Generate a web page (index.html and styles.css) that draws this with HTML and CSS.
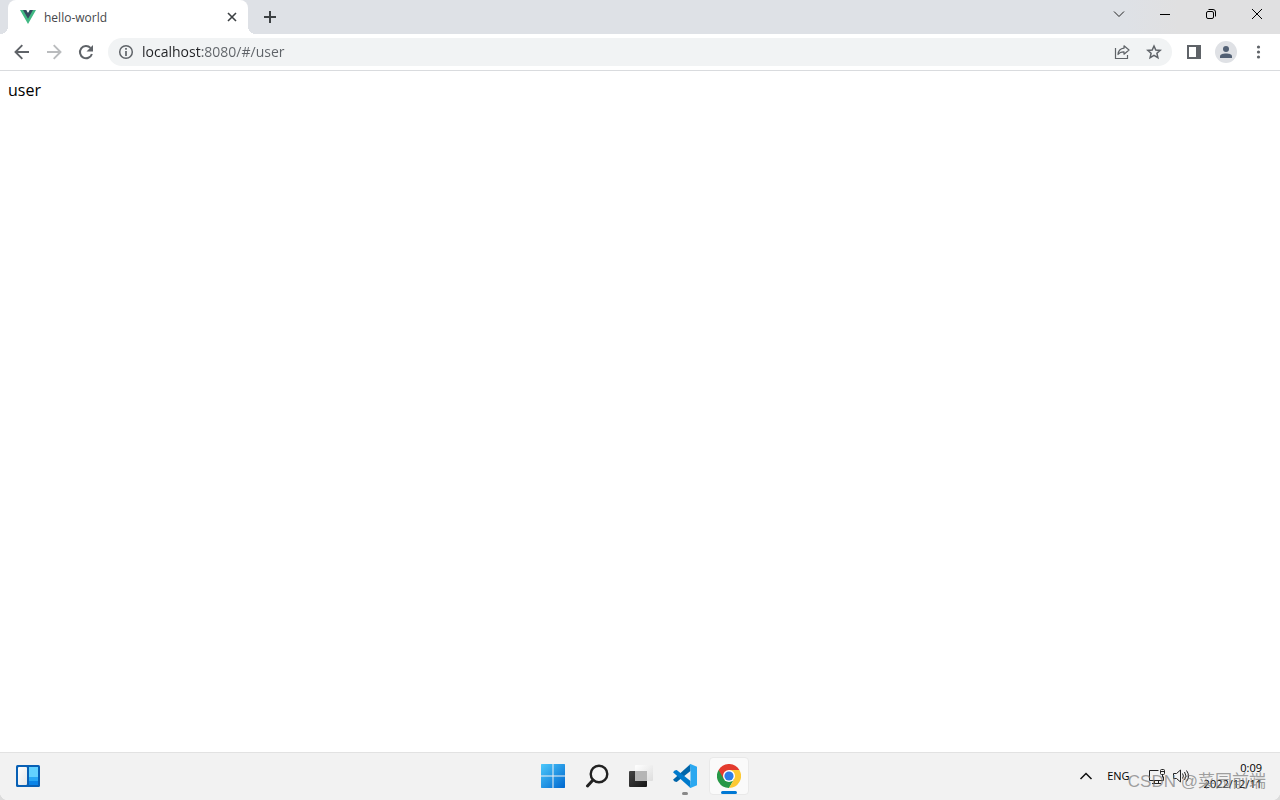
FILE: index.html
```
<!DOCTYPE html>
<html lang="en">
<head>
<meta charset="utf-8">
<title>hello-world</title>
<link rel="stylesheet" href="styles.css">
</head>
<body>
<div class="desktop">
  <header class="titlebar">
    <div class="tab">
      <svg class="tab-logo" width="16" height="16" viewBox="0 0 16 16" aria-hidden="true"><path fill="#41b883" d="M0 1h6l2 3.300L10 1h6L8 15z"/><path fill="#34495e" d="M3 1h3.200L8 4.200 9.800 1H13L8 9.800z"/></svg>
      <span class="tab-title">hello-world</span>
      <button class="icon-button tab-close" aria-label="Close tab"><svg width="16" height="16" viewBox="0 0 16 16"><path d="M4 4l8 8M12 4l-8 8" stroke="#3c4043" stroke-width="1.600"/></svg></button>
    </div>
    <button class="icon-button new-tab" aria-label="New tab"><svg width="16" height="16" viewBox="0 0 16 16"><path d="M8 2v12M2 8h12" stroke="#3c4043" stroke-width="2"/></svg></button>
    <div class="window-controls">
      <button class="icon-button window-button" aria-label="Search tabs"><svg width="12" height="12" viewBox="0 0 12 12"><path d="M1 3.500l5 5 5-5" fill="none" stroke="#222" stroke-width="1"/></svg></button>
      <button class="icon-button window-button" aria-label="Minimize"><svg width="12" height="12" viewBox="0 0 12 12"><path d="M1 6.500h10" stroke="#000"/></svg></button>
      <button class="icon-button window-button" aria-label="Restore"><svg width="12" height="12" viewBox="0 0 12 12"><rect x="1.500" y="3.500" width="7" height="7" rx="1.500" fill="none" stroke="#000"/><path d="M3.500 1.500H8a2.500 2.500 0 0 1 2.500 2.500v4.500" fill="none" stroke="#000"/></svg></button>
      <button class="icon-button window-button" aria-label="Close"><svg width="12" height="12" viewBox="0 0 12 12"><path d="M1 1l10 10M11 1L1 11" stroke="#000" stroke-width="1"/></svg></button>
    </div>
  </header>

  <nav class="toolbar" aria-label="Browser toolbar">
    <button class="icon-button tool" aria-label="Back"><svg width="16" height="16" viewBox="0 0 16 16"><path d="M15 8H2M8.300 1.200L1.500 8l6.800 6.800" fill="none" stroke="#5f6368" stroke-width="1.900"/></svg></button>
    <button class="icon-button tool" aria-label="Forward"><svg width="16" height="16" viewBox="0 0 16 16"><path d="M1 8h13M7.700 1.200L14.500 8l-6.800 6.800" fill="none" stroke="#babcbe" stroke-width="1.900"/></svg></button>
    <button class="icon-button tool" aria-label="Reload"><svg width="16" height="16" viewBox="0 0 16 16"><path d="M13.900 10A6.100 6.100 0 1 1 12.500 3.900" fill="none" stroke="#5f6368" stroke-width="2"/><path d="M15 1v6.500H8.500z" fill="#5f6368"/></svg></button>
    <div class="omnibox">
      <svg width="16" height="16" viewBox="0 0 16 16" aria-hidden="true"><circle cx="8" cy="8" r="6.300" fill="none" stroke="#5f6368" stroke-width="1.500"/><path d="M8 4v1.700M8 7v5" stroke="#5f6368" stroke-width="1.700"/></svg>
      <input class="address" type="text" aria-label="Address" value="localhost:8080/#/user" spellcheck="false">
      <button class="icon-button tool" aria-label="Share"><svg width="16" height="16" viewBox="0 0 16 16"><path d="M1.500 4v10.500h12V11" fill="none" stroke="#5f6368" stroke-width="1.200"/><path d="M10 1.800L15 6l-5 4.200V7.800C7.200 7.700 5.400 8.600 4 10.500 4.300 7 6.500 4.600 10 4.200z" fill="none" stroke="#5f6368" stroke-width="1.200" stroke-linejoin="round"/></svg></button>
      <button class="icon-button tool" aria-label="Bookmark"><svg width="16" height="16" viewBox="0 0 16 16"><path d="M8 2l1.800 4 4.400.4-3.300 2.900 1 4.300L8 11.300l-3.900 2.300 1-4.300-3.300-2.900 4.400-.4z" fill="none" stroke="#5f6368" stroke-width="1.500"/></svg></button>
    </div>
    <button class="icon-button tool" aria-label="Side panel"><svg width="16" height="16" viewBox="0 0 16 16"><path d="M1 1h14v14H1zM3 3v10h7V3z" fill="#5f6368" fill-rule="evenodd"/></svg></button>
    <button class="icon-button tool" aria-label="Profile"><svg width="22" height="22" viewBox="0 0 22 22"><circle cx="11" cy="11" r="11" fill="#dfe1e5"/><circle cx="11" cy="8" r="3" fill="#526074"/><path d="M5 17v-1.500C5 13.200 8 12.500 11 12.500s6 .7 6 3V17z" fill="#526074"/></svg></button>
    <button class="icon-button tool" aria-label="Menu"><svg width="16" height="16" viewBox="0 0 16 16"><g fill="#5f6368"><circle cx="8.500" cy="3" r="1.600"/><circle cx="8.500" cy="8" r="1.600"/><circle cx="8.500" cy="13" r="1.600"/></g></svg></button>
  </nav>

  <main class="page">user</main>

  <footer class="taskbar">
    <button class="icon-button widgets" aria-label="Widgets">
      <svg width="24" height="22" viewBox="0 0 24 22"><defs><linearGradient id="pane" x2="1" y2="1"><stop stop-color="#fff"/><stop offset="1" stop-color="#e4e6e8"/></linearGradient></defs><rect width="24" height="22" rx="1.500" fill="#0860b5"/><rect x="2" y="2" width="9" height="18" rx="1" fill="url(#pane)"/><path d="M13 2h9v10h-9z" fill="#63d2ff"/><path d="M13 12h9v4h-9z" fill="#28a8f5"/><path d="M13 16h9v4h-9z" fill="#0a84e8"/></svg>
    </button>
    <div class="apps">
      <button class="icon-button app" aria-label="Start"><svg width="24" height="24" viewBox="0 0 24 24"><defs><linearGradient id="win" gradientUnits="userSpaceOnUse" x1="0" y1="0" x2="24" y2="24"><stop stop-color="#4cc8fb"/><stop offset="1" stop-color="#0067cf"/></linearGradient></defs><path fill="url(#win)" d="M.5 0H11.500v11.500H0V.5zM12.500 0H23.500l.5.5v11h-11.500zM0 12.500h11.500V24H.5l-.5-.5zM12.500 12.500H24v11l-.5.500H12.500z"/></svg></button>
      <button class="icon-button app" aria-label="Search"><svg width="24" height="24" viewBox="0 0 24 24"><circle cx="14" cy="10" r="8.300" fill="#f6f6f6" stroke="#222" stroke-width="2.400"/><path d="M8 16L2.500 22" stroke="#222" stroke-width="3" stroke-linecap="round"/></svg></button>
      <button class="icon-button app" aria-label="Task view"><svg width="24" height="24" viewBox="0 0 24 24"><defs><linearGradient id="dark" x2="1" y2="1"><stop stop-color="#454545"/><stop offset="1" stop-color="#151515"/></linearGradient><linearGradient id="light" x2="1" y2="1"><stop stop-color="#fff"/><stop offset="1" stop-color="#ddd"/></linearGradient></defs><rect y="7" width="18" height="16" rx="1" fill="url(#dark)"/><rect x="6" y="1" width="18" height="16" rx="1" fill="url(#light)"/><path d="M6 7h12v10H6z" fill="#b5b5b5"/></svg></button>
      <button class="icon-button app running" aria-label="Visual Studio Code"><svg width="24" height="24" viewBox="0 0 24 24"><path d="M17.500 0L0 15.800l1.700 1.800 2 .4L17.500 7z" fill="#0065a9"/><path d="M3.700 6L1.700 6.400 0 8.200 17.500 24v-7z" fill="#007acc"/><path d="M17.500 0L24 2.800v18.400L17.500 24l-1-1 1-3V4l-1-3z" fill="#2ba8f0"/></svg></button>
      <button class="icon-button app active" aria-label="Chrome"><svg width="24" height="24" viewBox="0 0 24 24"><path d="M1.600 6A12 12 0 0 0 12 24l5.200-9L12 12z" fill="#279847"/><path d="M12 6h10.400A12 12 0 0 1 12 24l5.200-9z" fill="#fcc934"/><path d="M1.600 6A12 12 0 0 1 22.400 6H12v6l-5.200 3z" fill="#e33b2e"/><circle cx="12" cy="12" r="6" fill="#fff"/><circle cx="12" cy="12" r="4.600" fill="#2b7de9"/></svg></button>
    </div>
    <div class="tray">
      <button class="icon-button tray-more" aria-label="Show hidden icons"><svg width="14" height="14" viewBox="0 0 14 14"><path d="M1.500 10L7 4.500l5.500 5.500" fill="none" stroke="#111" stroke-width="1.500"/></svg></button>
      <button class="icon-button language">ENG</button>
      <button class="icon-button status" aria-label="Network and volume">
        <svg width="18" height="16" viewBox="0 0 18 16"><path d="M10.500 2.500h-9v10h14v-4M6.500 12.500v2.500M10.500 12.500v2.500M4 15.500h9" fill="none" stroke="#222"/><rect x="12.500" y="1.500" width="4" height="5" rx="1" fill="none" stroke="#222"/><path d="M13 3.500h3M14.500 6.500v3" stroke="#222"/></svg>
        <svg width="18" height="16" viewBox="0 0 18 16"><path d="M1.500 5.500h3L8.500 2v12l-4-3.500h-3zM10.500 5.500q1.800 2.500 0 5M12.500 4q3 4 0 8M14.500 2.500q4 5.500 0 11" fill="none" stroke="#222"/></svg>
      </button>
      <button class="icon-button clock"><span>0:09</span><span>2022/12/11</span></button>
      <span class="watermark">CSDN @菜园前端</span>
    </div>
  </footer>
</div>
</body>
</html>
```
FILE: styles.css
```
* { box-sizing: border-box; }

body {
  margin: 0;
  background: #dcdcdc;
  color: #000;
  font-family: "Open Sans", "Noto Sans", "Noto Sans CJK SC", sans-serif;
}

.desktop {
  display: flex;
  flex-direction: column;
  min-height: 100vh;
  background: #fff;
  border-radius: 0 0 8px 8px;
  overflow: hidden;
}

.icon-button {
  display: flex;
  align-items: center;
  justify-content: center;
  padding: 0;
  border: 0;
  background: none;
  color: inherit;
  font: inherit;
}

.titlebar {
  display: flex;
  height: 34px;
  padding-left: 8px;
  background: linear-gradient(90deg, #dee1e6 88%, #e0e0e1 92%);
}

.tab {
  position: relative;
  display: flex;
  align-items: center;
  gap: 8px;
  width: 240px;
  padding: 0 8px 0 12px;
  background: #fff;
  border-radius: 8px 8px 0 0;
  font-size: 12px;
  color: #45474a;
}

.tab::before,
.tab::after {
  content: "";
  position: absolute;
  bottom: 0;
  width: 8px;
  height: 8px;
}

.tab::before {
  right: 100%;
  background: radial-gradient(circle at 0 0, transparent 8px, #fff 8px);
}

.tab::after {
  left: 100%;
  background: radial-gradient(circle at 100% 0, transparent 8px, #fff 8px);
}

.tab-title { flex: 1; }

.new-tab {
  width: 28px;
  margin-left: 8px;
}

.window-controls {
  display: flex;
  height: 28px;
  margin-left: auto;
}

.window-button { width: 46px; }

.toolbar {
  display: flex;
  align-items: center;
  height: 37px;
  padding: 0 6px;
  border-bottom: 1px solid #d9dbde;
}

.tool {
  width: 32px;
  height: 28px;
}

.omnibox {
  display: flex;
  flex: 1;
  align-items: center;
  height: 28px;
  margin: 0 6px;
  padding: 0 2px 0 10px;
  background: #f1f3f4;
  border-radius: 14px;
}

.address {
  flex: 1;
  min-width: 0;
  height: 28px;
  margin-left: 8px;
  padding: 0 0 2px;
  border: 0;
  outline: 0;
  background: linear-gradient(90deg, #202124 60px, #5f6368 60px);
  background-clip: text;
  -webkit-text-fill-color: transparent;
  font-family: inherit;
  font-size: 14px;
}

.page {
  flex: 1;
  padding: 8px;
  font-size: 16px;
  line-height: 22px;
}

.taskbar {
  display: grid;
  grid-template-columns: 1fr auto 1fr;
  align-items: center;
  height: 48px;
  padding: 0 14px 2px 16px;
  background: #f2f2f2;
  border-top: 1px solid #e2e2e2;
}

.widgets { justify-self: start; }

.apps {
  display: flex;
  gap: 4px;
}

.app {
  position: relative;
  width: 40px;
  height: 38px;
}

.active {
  background: #fafafa;
  border: 1px solid #e9e9e9;
  border-radius: 4px;
}

.running::after,
.active::after {
  content: "";
  position: absolute;
  bottom: 0;
  width: 6px;
  height: 3px;
  border-radius: 2px;
  background: #888;
}

.active::after {
  width: 16px;
  background: #0078d4;
}

.tray {
  position: relative;
  display: flex;
  align-items: center;
  justify-self: end;
  font-size: 11px;
  line-height: 16px;
}

.tray-more { margin-right: 14px; }

.language { margin-right: 18px; }

.status {
  gap: 6px;
  margin-right: 14px;
}

.clock {
  flex-direction: column;
  align-items: flex-end;
  margin-right: 4px;
}

.watermark {
  position: absolute;
  right: 0;
  top: 10px;
  color: rgb(120 120 120 / 70%);
  font-family: "Liberation Sans", "Noto Sans CJK SC", sans-serif;
  font-size: 17px;
  line-height: 24px;
  white-space: nowrap;
}
```
